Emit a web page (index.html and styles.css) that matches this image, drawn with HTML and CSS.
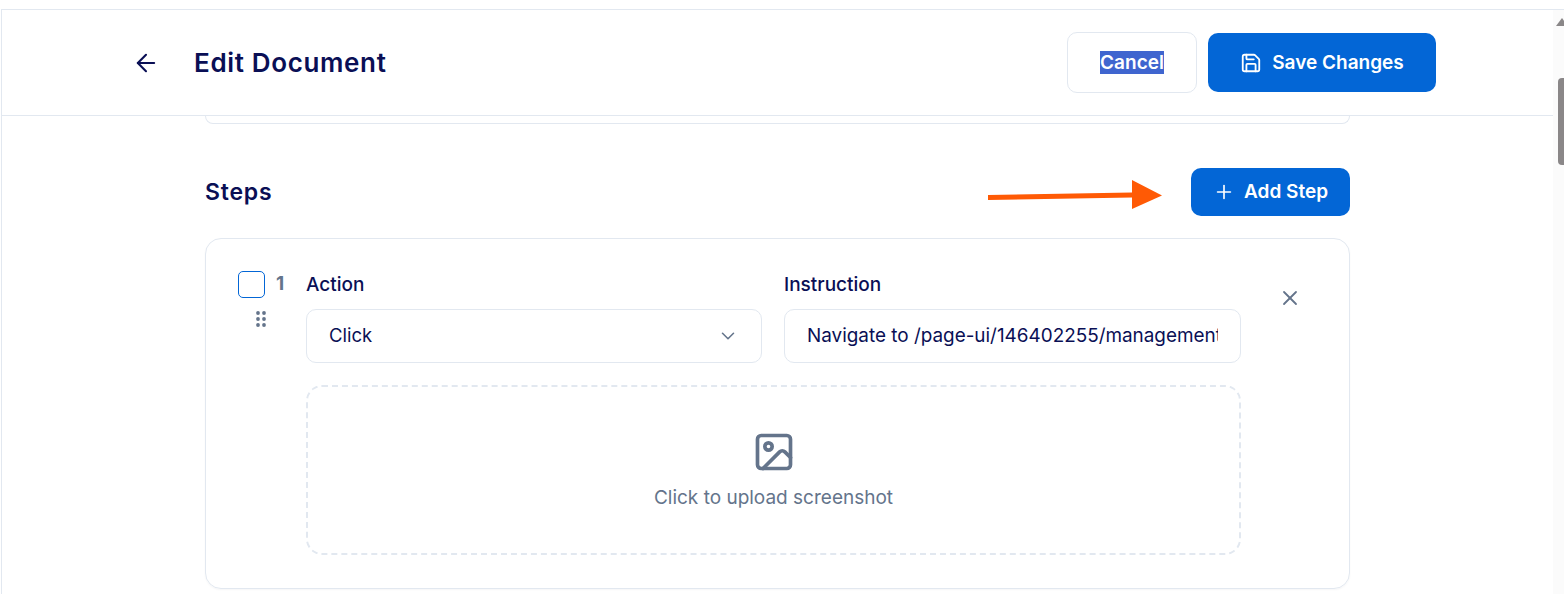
FILE: index.html
```html
<!DOCTYPE html>
<html>
<head>
    <title>Edit Document</title>
    <link rel="stylesheet" href="styles.css">
</head>
<body>
<div class="page">
    <header class="topbar">
        <div class="topbar-left">
            <svg class="back-icon" width="28" height="28" viewBox="0 0 24 24" fill="none" stroke="currentColor" stroke-width="1.8" stroke-linecap="round" stroke-linejoin="round"><path d="M19 12H5"/><path d="M12 19l-7-7 7-7"/></svg>
            <h1>Edit Document</h1>
        </div>
        <div class="topbar-actions">
            <a href="#" class="button button-outline"><span class="selected-text">Cancel</span></a>
            <a href="#" class="button button-save">
                <svg width="22" height="22" viewBox="0 0 24 24" fill="none" stroke="currentColor" stroke-width="2" stroke-linecap="round" stroke-linejoin="round"><path d="M15.2 3a2 2 0 0 1 1.4.6l3.8 3.8a2 2 0 0 1 .6 1.4V19a2 2 0 0 1-2 2H5a2 2 0 0 1-2-2V5a2 2 0 0 1 2-2z"/><path d="M17 21v-7a1 1 0 0 0-1-1H8a1 1 0 0 0-1 1v7"/><path d="M7 3v4a1 1 0 0 0 1 1h7"/></svg>
                Save Changes
            </a>
        </div>
    </header>

    <main class="content">
        <div class="prev-card"></div>

        <div class="steps-head">
            <h2>Steps</h2>
            <a href="#" class="button button-add">
                <svg width="22" height="22" viewBox="0 0 24 24" fill="none" stroke="currentColor" stroke-width="1.8" stroke-linecap="round"><path d="M12 5v14"/><path d="M5 12h14"/></svg>
                <span class="button-label">Add Step</span>
            </a>
        </div>

        <div class="step-card">
            <div class="step-side">
                <div class="step-top">
                    <span class="checkbox"></span>
                    <span class="step-num">1</span>
                </div>
                <svg class="drag-icon" width="12" height="18" viewBox="0 0 12 18" fill="currentColor"><circle cx="3" cy="3" r="1.9"/><circle cx="9" cy="3" r="1.9"/><circle cx="3" cy="9" r="1.9"/><circle cx="9" cy="9" r="1.9"/><circle cx="3" cy="15" r="1.9"/><circle cx="9" cy="15" r="1.9"/></svg>
            </div>

            <div class="step-body">
                <div class="step-fields">
                    <div class="field field-action">
                        <label>Action</label>
                        <div class="control control-select">
                            <span>Click</span>
                            <svg class="chevron" width="22" height="22" viewBox="0 0 24 24" fill="none" stroke="currentColor" stroke-width="1.7" stroke-linecap="round" stroke-linejoin="round"><path d="M6 9l6 6 6-6"/></svg>
                        </div>
                    </div>
                    <div class="field">
                        <label>Instruction</label>
                        <div class="control">
                            <span class="control-text">Navigate to /page-ui/146402255/management</span>
                        </div>
                    </div>
                </div>
                <div class="dropzone">
                    <svg width="44" height="44" viewBox="0 0 24 24" fill="none" stroke="currentColor" stroke-width="2" stroke-linecap="round" stroke-linejoin="round"><rect x="3" y="3" width="18" height="18" rx="2"/><circle cx="9" cy="9" r="2"/><path d="M21 15l-3.086-3.086a2 2 0 0 0-2.828 0L6 21"/></svg>
                    <span>Click to upload screenshot</span>
                </div>
            </div>

            <svg class="close-icon" width="24" height="24" viewBox="0 0 24 24" fill="none" stroke="currentColor" stroke-width="1.8" stroke-linecap="round"><path d="M18 6L6 18"/><path d="M6 6l12 12"/></svg>
        </div>
    </main>

    <!-- arrow drawn over the screenshot -->
    <svg class="annotation" width="180" height="34" viewBox="0 0 180 34"><path d="M0 15L144 12.5V0L174 15.5L144 29V17.5L0 20z" fill="#ff5a05"/></svg>

    <div class="scrollbar">
        <div class="scroll-up"></div>
        <div class="scroll-thumb"></div>
    </div>
</div>
</body>
</html>
```

FILE: styles.css
```css
html, body {
    margin: 0;
    height: 100%;
    overflow: hidden;
    background-color: #FFFFFF;
}

body {
    font-family: Inter, "Liberation Sans", sans-serif;
    color: #0A0F55;
}

.page {
    position: relative;
    height: 584px;
    margin-top: 9px;
    margin-left: 1px;
    border-top: 1px solid #E2E8F0;
    border-left: 1px solid #E2E8F0;
    overflow: hidden;
}

/* Top bar */
.topbar {
    height: 106px;
    margin-right: 11px;
    box-sizing: border-box;
    padding: 0 117px 0 130px;
    display: flex;
    justify-content: space-between;
    align-items: center;
    border-bottom: 1px solid #E2E8F0;
    background-color: #FFFFFF;
}

.topbar-left {
    display: flex;
    align-items: center;
}

.back-icon {
    margin-right: 34px;
}

h1 {
    margin: 0;
    font-size: 26px;
    font-weight: 600;
    letter-spacing: 0.65px;
}

h2 {
    margin: 0;
    font-size: 23px;
    font-weight: 600;
    letter-spacing: 0.8px;
}

.topbar-actions {
    display: flex;
    align-items: center;
    gap: 11px;
}

.button {
    display: flex;
    align-items: center;
    justify-content: center;
    box-sizing: border-box;
    border-radius: 10px;
    font-size: 19px;
    font-weight: 600;
    color: #FFFFFF;
    text-decoration: none;
}

.button-outline {
    width: 130px;
    height: 61px;
    border: 1px solid #E2E8F0;
}

.selected-text {
    background-color: #3F65CF;
}

.button-save {
    width: 228px;
    height: 59px;
    gap: 10px;
    background-color: #0366D6;
}

.button-add {
    width: 159px;
    height: 48px;
    gap: 9px;
    background-color: #0366D6;
}

.button-label {
    margin-bottom: 1px;
}

/* Content */
.content {
    padding: 0 214px 0 203px;
}

.prev-card {
    height: 8px;
    box-sizing: border-box;
    border: 1px solid #E2E8F0;
    border-top: none;
    border-radius: 0 0 16px 16px;
}

.steps-head {
    margin-top: 44px;
    display: flex;
    justify-content: space-between;
    align-items: center;
}

.step-card {
    margin-top: 22px;
    height: 351px;
    box-sizing: border-box;
    padding: 32px 48px 32px 32px;
    display: flex;
    border: 1px solid #E2E8F0;
    border-radius: 16px;
    box-shadow: 0 1px 2px rgba(15, 23, 42, 0.04);
}

.step-side {
    width: 68px;
    flex-shrink: 0;
}

.step-top {
    display: flex;
    align-items: flex-start;
    gap: 11px;
}

.checkbox {
    width: 27px;
    height: 27px;
    box-sizing: border-box;
    border: 1px solid #0366D6;
    border-radius: 5px;
}

.step-num {
    font-size: 19px;
    font-weight: 700;
    line-height: 26px;
    color: #64748B;
}

.drag-icon {
    display: block;
    margin: 12px 0 0 17px;
    color: #64748B;
}

.step-body {
    width: 935px;
    flex-shrink: 0;
}

.step-fields {
    display: flex;
    gap: 22px;
}

.field {
    flex: 1;
    min-width: 0;
}

.field-action {
    flex: 0 0 456px;
}

label {
    display: block;
    height: 26px;
    padding-top: 1px;
    margin-bottom: 11px;
    font-size: 19px;
    font-weight: 500;
    line-height: 26px;
}

.control {
    height: 54px;
    box-sizing: border-box;
    padding: 0 22px 2px;
    display: flex;
    align-items: center;
    border: 1px solid #E2E8F0;
    border-radius: 10px;
    font-size: 18.9px;
}

.control-select {
    justify-content: space-between;
    padding-right: 22px;
    font-size: 18.5px;
}

.control-text {
    overflow: hidden;
    white-space: nowrap;
}

.chevron {
    margin-top: 2px;
    color: #64748B;
}

.dropzone {
    height: 170px;
    margin-top: 22px;
    padding-bottom: 1px;
    box-sizing: border-box;
    display: flex;
    flex-direction: column;
    align-items: center;
    justify-content: center;
    gap: 12px;
    border: 2px dashed #E2E8F0;
    border-radius: 16px;
    color: #64748B;
    font-size: 19px;
}

.close-icon {
    margin: 15px 0 0 37px;
    flex-shrink: 0;
    color: #64748B;
}

/* Annotation arrow */
.annotation {
    position: absolute;
    left: 986px;
    top: 170px;
}

/* Scrollbar on the right edge */
.scrollbar {
    position: absolute;
    top: 0;
    right: 0;
    width: 11px;
    height: 100%;
    background-color: #FBFBFB;
}

.scroll-up {
    position: absolute;
    top: 8px;
    left: 3px;
    border-left: 6px solid transparent;
    border-right: 6px solid transparent;
    border-bottom: 8px solid #8A8788;
}

.scroll-thumb {
    position: absolute;
    top: 68px;
    left: 5px;
    width: 8px;
    height: 87px;
    border-radius: 4px 0 0 4px;
    background-color: #8A8788;
}
```
